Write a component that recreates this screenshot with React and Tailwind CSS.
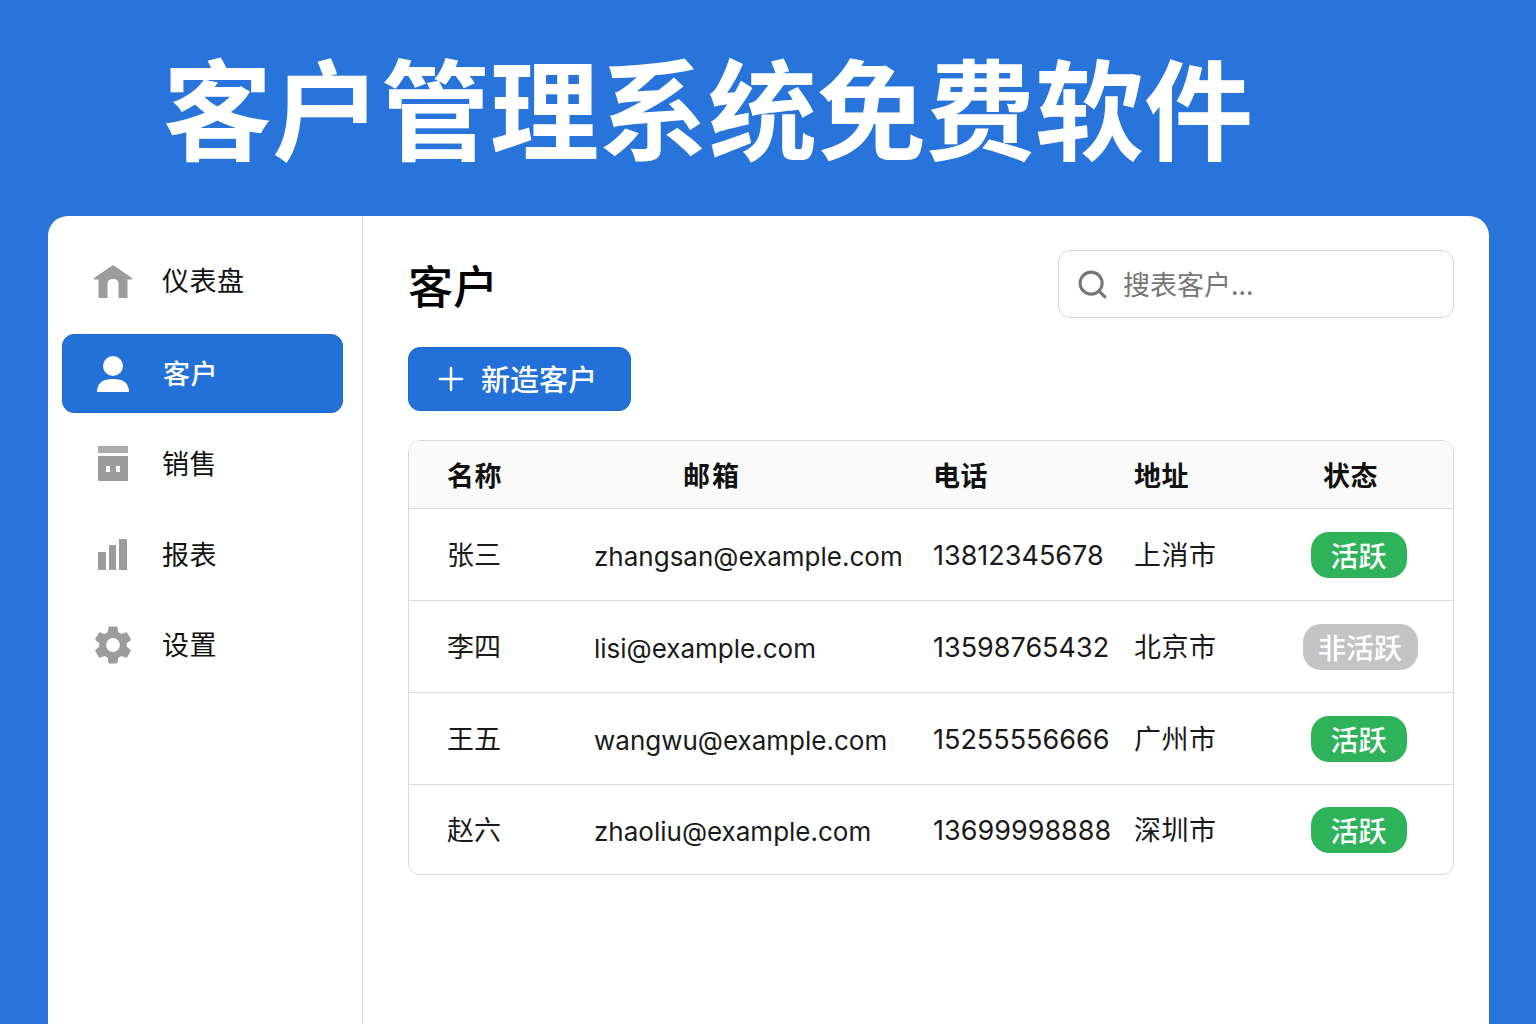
import React from "react";
import { Search, Plus } from "lucide-react";

const CJK = "font-['Noto_Sans_CJK_SC','Noto_Sans',sans-serif]";
const LATIN = "font-['Inter','Noto_Sans_CJK_SC',sans-serif]";

const HomeIcon = () => (
  <svg viewBox="0 0 38 33" className="w-[38px] h-[33px]" fill="#9c9c9c">
    <path d="M19 0 L38 13 L38 14.5 L33.5 14.5 L33.5 33 L24.5 33 L24.5 19 Q24.5 14 19 14 Q13.5 14 13.5 19 L13.5 33 L4.5 33 L4.5 14.5 L0 14.5 L0 13 Z" />
  </svg>
);

const UserIcon = () => (
  <svg viewBox="0 0 34 36" className="w-[34px] h-[36px] -ml-[2px]" fill="#ffffff">
    <circle cx="17" cy="10" r="10" />
    <path d="M1 36 Q1 23 17 23 Q33 23 33 36 Z" />
  </svg>
);

const SalesIcon = () => (
  <svg viewBox="0 0 30 35" className="w-[30px] h-[35px]" fill="#9c9c9c">
    <rect x="0" y="0" width="30" height="7" opacity="0.85" />
    <path fillRule="evenodd" d="M0 10 H30 V35 H0 Z M8 20 V26 H12 V20 Z M18 20 V26 H22 V20 Z" />
  </svg>
);

const ChartIcon = () => (
  <svg viewBox="0 0 29 31" className="w-[29px] h-[31px]" fill="#9c9c9c">
    <rect x="0" y="13" width="8" height="18" />
    <rect x="11" y="6" width="7" height="25" />
    <rect x="21" y="0" width="8" height="31" />
  </svg>
);

const GearIcon = () => (
  <svg viewBox="0 0 24 24" className="w-[46px] h-[46px] shrink-0" fill="#9c9c9c">
    <path d="M19.14 12.94c.04-.3.06-.61.06-.94s-.02-.64-.07-.94l2.03-1.58a.49.49 0 0 0 .12-.61l-1.92-3.32a.49.49 0 0 0-.59-.22l-2.39.96a7 7 0 0 0-1.62-.94l-.36-2.54a.48.48 0 0 0-.48-.41h-3.84a.48.48 0 0 0-.47.41l-.36 2.54c-.59.24-1.13.57-1.62.94l-2.39-.96a.49.49 0 0 0-.59.22L2.74 8.87a.48.48 0 0 0 .12.61l2.03 1.58c-.05.3-.09.63-.09.94s.02.64.07.94l-2.03 1.58a.49.49 0 0 0-.12.61l1.92 3.32c.12.22.37.29.59.22l2.39-.96c.5.38 1.03.7 1.62.94l.36 2.54c.05.24.24.41.48.41h3.84c.24 0 .44-.17.47-.41l.36-2.54c.59-.24 1.13-.56 1.62-.94l2.39.96c.22.08.47 0 .59-.22l1.92-3.32a.48.48 0 0 0-.12-.61zM12 15.6A3.6 3.6 0 1 1 12 8.4a3.6 3.6 0 0 1 0 7.2z" />
  </svg>
);

const navItems = [
  { label: "仪表盘", icon: <HomeIcon />, cls: "h-[78px] mb-[14px]" },
  { label: "客户", icon: <UserIcon />, active: true, cls: "h-[79px] mb-[5px]" },
  { label: "销售", icon: <SalesIcon />, cls: "h-[91px]" },
  { label: "报表", icon: <ChartIcon />, cls: "h-[91px]" },
  { label: "设置", icon: <GearIcon />, cls: "h-[89px]" },
];

const customers = [
  { name: "张三", email: "zhangsan@example.com", phone: "13812345678", city: "上消市", active: true },
  { name: "李四", email: "lisi@example.com", phone: "13598765432", city: "北京市", active: false },
  { name: "王五", email: "wangwu@example.com", phone: "15255556666", city: "广州市", active: true },
  { name: "赵六", email: "zhaoliu@example.com", phone: "13699998888", city: "深圳市", active: true },
];

const rowCols = "grid grid-cols-[185px_339px_201px_130px_1fr] items-center";

function Sidebar() {
  return (
    <aside className="w-[315px] shrink-0 border-r border-[#dcdcdc] pl-[14px] pr-[19px] pt-[26px]">
      {navItems.map(item => (
        <div
          key={item.label}
          className={`flex items-center rounded-xl ${item.cls} ${
            item.active ? "bg-[#2270d8] border border-[#1c68cf] text-white font-medium" : "text-[#111]"
          }`}
        >
          <div className="w-[100px] pl-[31px] pr-[30px] flex justify-center shrink-0">{item.icon}</div>
          <span className="text-[27px] leading-none tracking-[0.5px] pb-[3px]">{item.label}</span>
        </div>
      ))}
    </aside>
  );
}

function CustomerTable() {
  return (
    <div className="mt-[29px] border border-[#dadada] rounded-xl overflow-hidden">
      <div className={`${rowCols} h-[68px] bg-[#fafafa] text-[27px] font-semibold text-[#111] border-b border-[#dadada] pt-[2px]`}>
        <div className="pl-[38px] tracking-[0.5px]">名称</div>
        <div className="pl-[89px] tracking-[2px]">邮箱</div>
        <div className="tracking-[0.5px]">电话</div>
        <div className="tracking-[0.5px]">地址</div>
        <div className="text-center pr-4 tracking-[0.5px]">状态</div>
      </div>
      {customers.map((c, i) => (
        <div
          key={c.email}
          className={`${rowCols} text-[27px] text-[#1a1a1a] ${
            i < customers.length - 1 ? "h-[92px] border-b border-[#dadada]" : "h-[89px]"
          }`}
        >
          <div className="pl-[38px]">{c.name}</div>
          <div className={`${LATIN} text-[26px] pt-[4px]`}>{c.email}</div>
          <div className={`${LATIN} text-[27px] pt-[4px]`}>{c.phone}</div>
          <div className="tracking-[0.5px]">{c.city}</div>
          <div className="flex justify-center">
            <span
              className={`h-[46px] flex items-center justify-center rounded-[18px] text-white text-[28px] font-medium ${
                c.active ? "w-[96px] bg-[#2fb35a]" : "w-[115px] ml-[3px] bg-[#c4c4c4]"
              }`}
            >
              {c.active ? "活跃" : "非活跃"}
            </span>
          </div>
        </div>
      ))}
    </div>
  );
}

export default function App() {
  return (
    <div className={`h-[1024px] bg-[#2874db] flex flex-col overflow-hidden ${CJK}`}>
      <h1 className="h-[216px] pl-[163px] flex items-center pb-[7px] text-white text-[109px] leading-none font-bold shrink-0">
        客户管理系统免费软件
      </h1>
      <div className="ml-12 w-[1441px] flex-1 bg-white rounded-t-[20px] flex">
        <Sidebar />
        <main className="flex-1 pl-[45px] pr-[35px] pt-[34px]">
          <div className="flex items-center justify-between h-[68px]">
            <h2 className="text-[45px] leading-none font-medium text-black">客户</h2>
            <div className="w-[396px] h-[68px] border border-[#d6d6d6] rounded-xl flex items-center pl-[17px] gap-[14px]">
              <Search size={33} strokeWidth={2.2} className="text-[#777]" />
              <span className="text-[27px] text-[#777]">搜表客户...</span>
            </div>
          </div>
          <button className="mt-[29px] w-[223px] h-[64px] bg-[#2270d8] border border-[#1c68cf] text-white rounded-xl flex items-center pl-[23px] gap-[11px] text-[29px] font-medium">
            <Plus size={38} strokeWidth={1.6} />
            新造客户
          </button>
          <CustomerTable />
        </main>
      </div>
    </div>
  );
}
